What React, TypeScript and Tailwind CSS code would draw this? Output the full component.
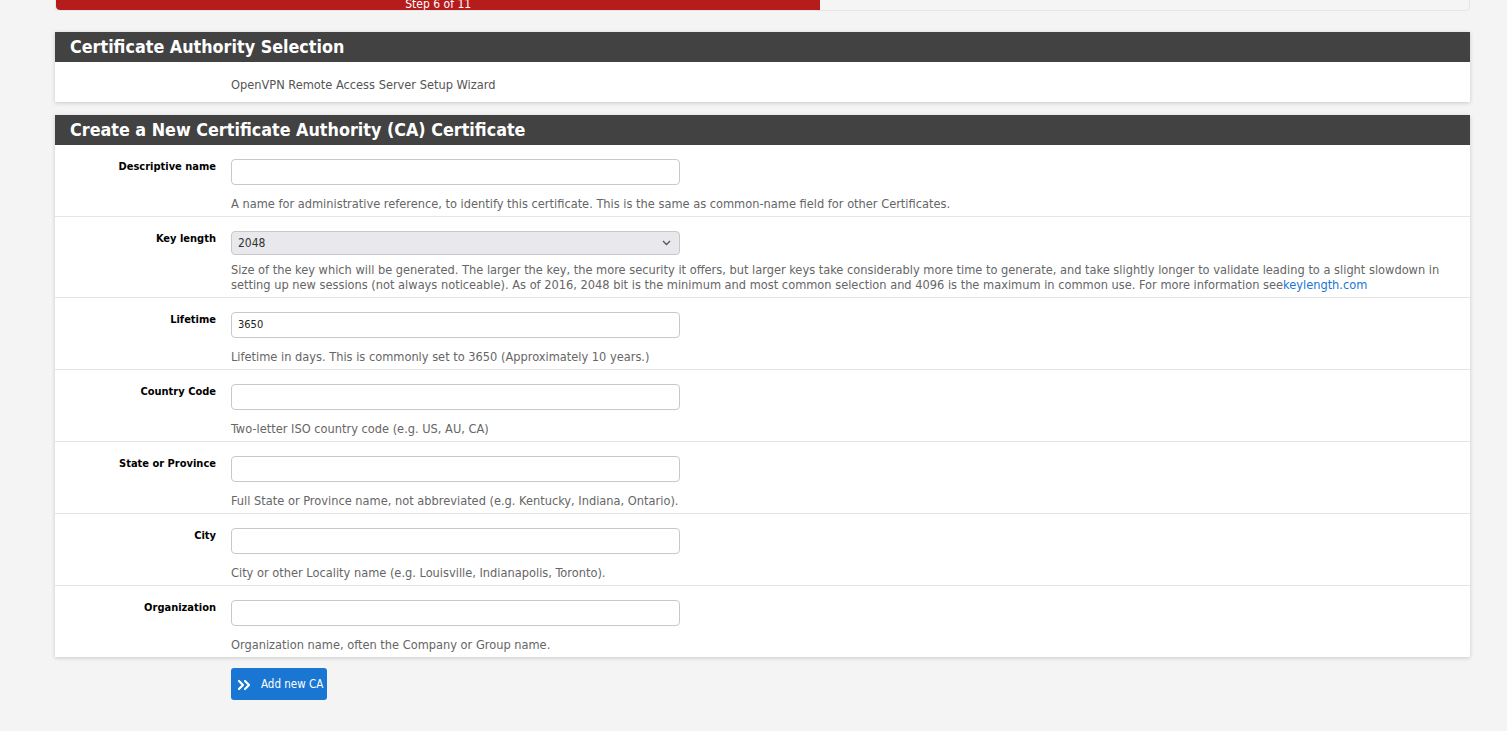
import React from "react";

const font = { fontFamily: '"DejaVu Sans Condensed", "DejaVu Sans", sans-serif' };

function Row({
  label,
  help,
  children,
  select = false,
}: {
  label: string;
  help: React.ReactNode;
  children: React.ReactNode;
  select?: boolean;
}) {
  return (
    <div className="flex border-b border-[#e5e5e5] pb-[5px] pt-[14px] last:border-b-0">
      <div className="w-[176px] shrink-0 pr-[15px] text-right text-[11px] font-bold leading-[16px] text-black">
        {label}
      </div>
      <div className="flex-1 pr-[30px]">
        {children}
        <div className={`${select ? "mt-[7px]" : "mt-[11px]"} text-[12.7px] leading-[15px] text-[#666]`}>{help}</div>
      </div>
    </div>
  );
}

function TextInput({ value = "" }: { value?: string }) {
  return (
    <div className="flex h-[26px] w-[449px] items-center rounded-[4px] border border-[#c8c8c8] bg-white px-[6px] text-[11px] text-[#222]">
      {value}
    </div>
  );
}

export default function App() {
  return (
    <div style={font} className="min-h-screen bg-[#f4f4f4] pl-[55px] pr-[37px]">
      {/* progress */}
      <div className="h-[11px] overflow-hidden rounded-b-[4px] border border-t-0 border-[#e6e6e6] bg-[#f5f5f5]">
        <div className="flex h-[10px] w-[54.1%] items-end justify-center overflow-hidden rounded-bl-[4px] bg-[#b71c1c]">
          <span className="text-[12px] leading-[11px] text-white">Step 6 of 11</span>
        </div>
      </div>

      {/* panel 1 */}
      <div className="mt-[21px] bg-white shadow-[0_1px_4px_rgba(0,0,0,0.18)]">
        <div className="flex h-[30px] items-center bg-[#424242] px-[15px] pt-[1px] text-[17.8px] font-bold text-white">
          Certificate Authority Selection
        </div>
        <div className="flex h-[40px] items-center pl-[176px] pt-[6px] text-[12.7px] text-[#555]">
          OpenVPN Remote Access Server Setup Wizard
        </div>
      </div>

      {/* panel 2 */}
      <div className="mt-[13px] bg-white shadow-[0_1px_4px_rgba(0,0,0,0.18)]">
        <div className="flex h-[30px] items-center bg-[#424242] px-[15px] pt-[1px] text-[17.8px] font-bold text-white">
          Create a New Certificate Authority (CA) Certificate
        </div>
        <Row
          label="Descriptive name"
          help="A name for administrative reference, to identify this certificate. This is the same as common-name field for other Certificates."
        >
          <TextInput />
        </Row>
        <Row
          select
          label="Key length"
          help={
            <>
              Size of the key which will be generated. The larger the key, the more security it offers, but larger keys take considerably more time to generate, and take slightly longer to validate leading to a slight slowdown in setting up new sessions (not always noticeable). As of 2016, 2048 bit is the minimum and most common selection and 4096 is the maximum in common use. For more information see
              <span className="text-[#1976d2]">keylength.com</span>
            </>
          }
        >
          <div className="flex h-[24px] w-[449px] items-center justify-between rounded-[4px] border border-[#c8c8c8] bg-[#e9e9ed] pl-[6px] pr-[8px] text-[12px] text-[#333]">
            <span>2048</span>
            <svg width="9" height="6" viewBox="0 0 9 6" fill="none">
              <path d="M1 1l3.5 3.5L8 1" stroke="#555" strokeWidth="1.3" />
            </svg>
          </div>
        </Row>
        <Row label="Lifetime" help="Lifetime in days. This is commonly set to 3650 (Approximately 10 years.)">
          <TextInput value="3650" />
        </Row>
        <Row label="Country Code" help="Two-letter ISO country code (e.g. US, AU, CA)">
          <TextInput />
        </Row>
        <Row label="State or Province" help="Full State or Province name, not abbreviated (e.g. Kentucky, Indiana, Ontario).">
          <TextInput />
        </Row>
        <Row label="City" help="City or other Locality name (e.g. Louisville, Indianapolis, Toronto).">
          <TextInput />
        </Row>
        <Row label="Organization" help="Organization name, often the Company or Group name.">
          <TextInput />
        </Row>
      </div>

      {/* button */}
      <div className="pl-[176px] pt-[11px] pb-[30px]">
        <button className="flex h-[32px] w-[96px] items-center gap-[10px] rounded-[3px] bg-[#1976d2] pl-[6px] pt-[2px] text-[11.5px] text-white">
          <svg width="14" height="12" viewBox="0 0 14 12" fill="none">
            <path d="M2 2l4 4-4 4M8 2l4 4-4 4" stroke="white" strokeWidth="2.2" strokeLinecap="round" strokeLinejoin="round" />
          </svg>
          <span>Add new CA</span>
        </button>
      </div>
    </div>
  );
}
